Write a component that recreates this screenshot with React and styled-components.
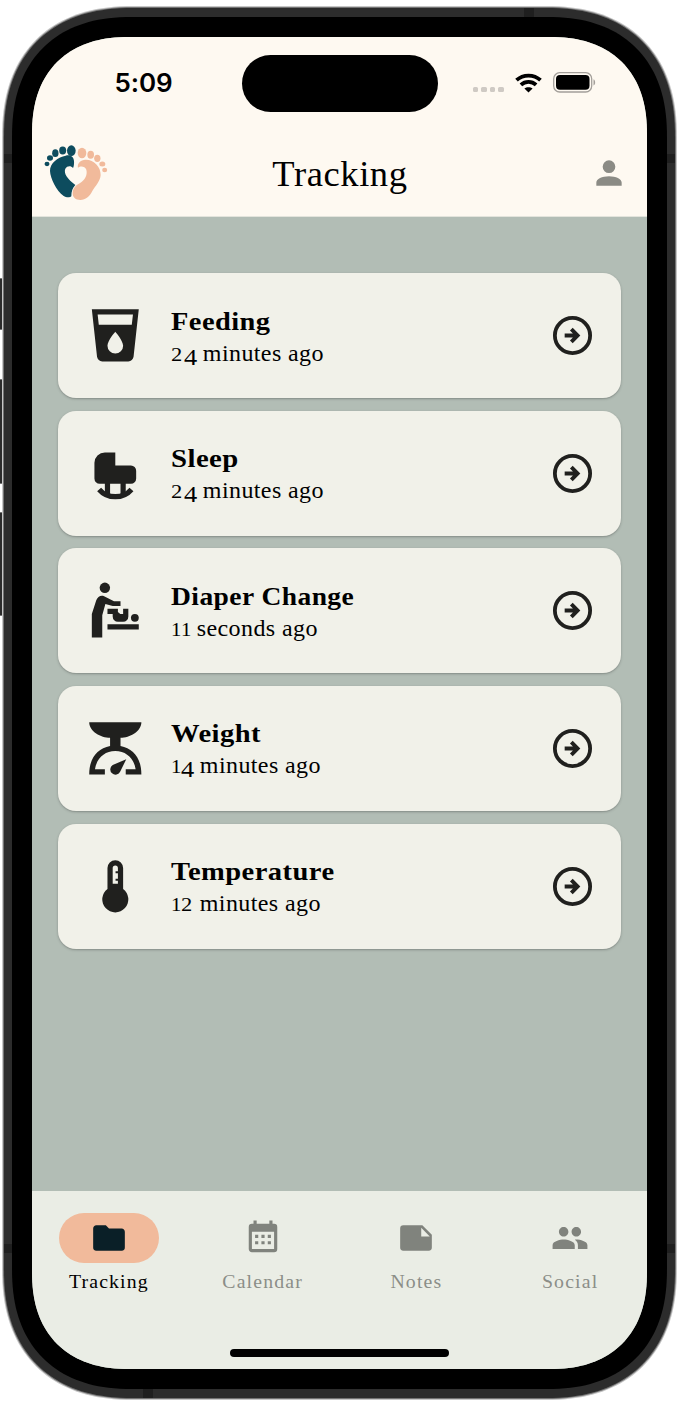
import React from 'react';
import styled, { createGlobalStyle } from 'styled-components';

// Rounded rectangle with superellipse corners, as an absolute clip path.
const smoothRect = (w, h, r) => {
  const a = r * 1.15;
  const n = 2.37;
  const steps = 40;
  const topLeft = Array.from({ length: steps + 1 }, (_, i) => {
    const t = (i / steps) * (Math.PI / 2);
    return [
      a * (1 - Math.max(0, Math.cos(t)) ** (2 / n)),
      a * (1 - Math.sin(t) ** (2 / n)),
    ];
  });
  const topRight = topLeft.map(([x, y]) => [w - x, y]).reverse();
  const bottomRight = topLeft.map(([x, y]) => [w - x, h - y]);
  const bottomLeft = topLeft.map(([x, y]) => [x, h - y]).reverse();
  const ring = [...topLeft, ...topRight, ...bottomRight, ...bottomLeft];
  return `path("M${ring.map(p => p.map(v => v.toFixed(2)).join(' ')).join('L')}Z")`;
};

const GlobalStyle = createGlobalStyle`
  * { box-sizing: border-box; }
  body { margin: 0; background: #fff; font-family: "Liberation Serif", serif; color: #000; }
  svg { display: block; flex: none; }
`;

const Stage = styled.main`
  position: relative;
  width: 677px;
  height: 1403px;
  padding: 6px 0 0 2px;
  overflow: hidden;
`;
const Shell = styled.div`
  position: relative;
  width: ${p => p.$w}px;
  height: ${p => p.$h}px;
  padding: ${p => p.$pad};
  background: ${p => p.$color};
  clip-path: ${p => smoothRect(p.$w, p.$h, p.$r)};
`;
const SideButton = styled.span`
  position: absolute;
  ${p => p.$side}: 0;
  top: ${p => p.$top}px;
  width: 3px;
  height: ${p => p.$h}px;
  background: #2b2b2b;
  border-top: 1px solid #777;
  border-bottom: 1px solid #777;
`;
const Antenna = styled.span`
  position: absolute;
  left: ${p => p.$x}px;
  top: ${p => p.$y}px;
  width: ${p => p.$w}px;
  height: ${p => p.$h}px;
  background: #1f1f1f;
`;
const Screen = styled.div`
  width: 615px;
  height: 1332px;
  display: flex;
  flex-direction: column;
  background: #b2bdb5;
  clip-path: ${smoothRect(615, 1332, 86)};
`;
const StatusBar = styled.div`
  height: 93px;
  padding-top: 17.5px;
  display: grid;
  grid-template-columns: 209.5px 196px 1fr;
  align-items: start;
  background: #fef9f1;
`;
const Time = styled.time`
  padding: 13.5px 0 0 82.5px;
  font: 600 26px/30px Inter, sans-serif;
  letter-spacing: -0.1px;
`;
const Island = styled.div`
  height: 57px;
  border-radius: 28.5px;
  background: #000;
`;
const Indicators = styled.div`
  display: flex;
  align-items: center;
  padding: 17.5px 0 0 35.5px;
`;
const Dots = styled.div`
  display: flex;
  gap: 3px;
  margin: 14px 11px 0 0;
`;
const Dot = styled.i`
  width: 5.4px;
  height: 5.4px;
  border-radius: 1.5px;
  background: #cfcac4;
`;
const BatteryIcon = styled.svg`
  margin-left: 11.5px;
`;
const Header = styled.header`
  height: 87px;
  flex: none;
  display: grid;
  grid-template-columns: 94px 1fr 94px;
  align-items: center;
  padding: 0 18.6px 0 12px;
  background: #fef9f1;
  border-bottom: 1px solid #e3e4dc;
`;
const Title = styled.h1`
  margin: 0;
  padding: 2px 0 0 7.5px;
  text-align: center;
  font-size: 36.5px;
  line-height: 44px;
  font-weight: 400;
  letter-spacing: 0.6px;
`;
const ProfileButton = styled.button`
  justify-self: end;
  border: 0;
  padding: 0;
  background: none;
  color: #8b8b85;
`;
const List = styled.section`
  flex: 1;
  display: flex;
  flex-direction: column;
  gap: 12.6px;
  padding: 56.2px 26px 0;
`;
const Card = styled.article`
  height: 125px;
  display: flex;
  align-items: center;
  padding: 0 24.8px 0 26px;
  border-radius: 18px;
  background: #f1f1e9;
  color: #20201e;
  box-shadow: 0 1px 3px rgba(0, 0, 0, 0.2), 0 1px 1px rgba(0, 0, 0, 0.08);
`;
const CardText = styled.div`
  flex: 1;
  padding: 2px 0 0 24.4px;
  color: #000;
`;
const CardTitle = styled.h2`
  margin: 0;
  width: max-content;
  font-size: 25px;
  line-height: 32px;
  font-weight: 700;
  letter-spacing: 0.4px;
  transform: translateY(0.6px) scaleX(${p => p.$stretch});
  transform-origin: left;
`;
const CardTime = styled.p`
  margin: 0;
  font-size: 24px;
  line-height: 32px;
  letter-spacing: 0.4px;
  white-space: pre;
`;
const figures = {
  1: { size: 0.75, width: 9.7, stretch: 1.15, drop: 0 },
  2: { size: 0.75, width: 12.7, stretch: 1.25, drop: 0 },
  4: { size: 1, width: 12.8, stretch: 1.1, drop: 3.5 },
};
const Digit = styled.span`
  display: inline-block;
  width: ${p => figures[p.$value].width}px;
  font-size: ${p => figures[p.$value].size}em;
  line-height: 1;
  letter-spacing: 0;
  transform: translateY(${p => figures[p.$value].drop}px) scaleX(${p => figures[p.$value].stretch});
  transform-origin: left;
`;
const TabBar = styled.nav`
  height: 178.5px;
  flex: none;
  display: grid;
  grid-template: 1fr auto / repeat(4, 1fr);
  padding: 22px 0 12px;
  background: #eaede5;
`;
const Tab = styled.a`
  display: flex;
  flex-direction: column;
  align-items: center;
  color: ${p => (p.$active ? '#000' : '#8b8e88')};
  font-size: 19.8px;
  line-height: 24px;
  letter-spacing: 1.15px;
`;
const Pill = styled.span`
  width: 100px;
  height: 50px;
  margin-bottom: 6px;
  display: grid;
  place-items: center;
  border-radius: 25px;
  background: ${p => (p.$active ? '#f1ba9b' : 'transparent')};
  color: ${p => (p.$active ? '#0a1f27' : '#80837d')};
`;
const HomeBar = styled.div`
  grid-column: 1 / -1;
  justify-self: center;
  width: 219px;
  height: 8px;
  border-radius: 4px;
  background: #000;
`;

const Icon = ({ size, children }) => (
  <svg width={size} height={size} viewBox="0 0 24 24" fill="currentColor">{children}</svg>
);

const Logo = () => (
  <svg width="64" height="56" viewBox="27 30 192 168">
    <g fill="#0d4c5e">
      <path d="M92 62C104 58 116 64 117 78C118 88 116 96 114 99C108 91 96 92 91 101C85 115 98 132 121 150C113 158 109 168 109 184C104 189 92 187 86 183C64 168 46 130 45 108C44 84 70 66 92 62Z" />
      <ellipse cx="36" cy="87" rx="7.500" ry="6.500" />
      <ellipse cx="45" cy="69" rx="9" ry="8" />
      <ellipse cx="61" cy="54.500" rx="9.500" ry="11.500" />
      <ellipse cx="83" cy="46.500" rx="10.500" ry="12" />
      <ellipse cx="109" cy="47" rx="13" ry="16" />
    </g>
    <g fill="#f1ba9b">
      <path d="M150 74C175 72 198 95 197 120C196 138 182 152 172 168C164 184 152 195 136 195C122 195 112 188 113 172C115 158 124 150 134 145C150 134 158 120 154 104C150 93 136 92 129 98C127 90 130 77 150 74Z" />
      <ellipse cx="141" cy="54" rx="13" ry="15.500" />
      <ellipse cx="167" cy="59" rx="10" ry="12" />
      <ellipse cx="187" cy="70" rx="9.500" ry="11" />
      <ellipse cx="202" cy="87" rx="9" ry="7.500" />
      <ellipse cx="209" cy="105" rx="7.500" ry="7" />
    </g>
  </svg>
);

const CupIcon = () => (
  <path d="M18.32 8H5.67L5.23 4H18.77M3 2L5 20.23C5.13 21.23 5.97 22 7 22H17C18 22 18.87 21.23 19 20.23L21 2H3M12 19A3 3 0 0 1 9 16C9 14 12 10.6 12 10.6C12 10.6 15 14 15 16A3 3 0 0 1 12 19Z" />
);
const CradleIcon = () => (
  <>
    <path d="M4 8a4 4 0 0 1 4-4h4v5h6a2 2 0 0 1 2 2v3a2 2 0 0 1-2 2H6a2 2 0 0 1-2-2zM8 16h2v4.500H8zM14 16h2v4.500h-2z" />
    <path d="M5.800 18.200C9 21.900 15 21.900 18.200 18.200" fill="none" stroke="currentColor" strokeWidth="2" />
  </>
);
const ChangingIcon = () => (
  <>
    <circle cx="8" cy="3" r="2" />
    <circle cx="19.500" cy="14.500" r="1.500" />
    <path d="M3 22V13L4.700 7.800C5.200 6.400 6.400 5.700 7.700 6.200L11.500 8.100H14V10H11L8.200 9.200L7 13.500V22ZM9 17h12v2H9zM9 11h4v1.300l.9.700h1.100v-2h2v3a2 2 0 0 1-2 2h-2a2 2 0 0 1-2-2v-1H9z" />
  </>
);
const ScaleIcon = () => (
  <path d="M2 2H22C22 5.500 17.500 8 14 8V11.100C19 12 22 16 22 22H16V20H19.800C19.200 16 16.300 13 12 13S4.800 16 4.200 20H8V22H2C2 16 5 12 10 11.100V8C6.500 8 2 5.500 2 2ZM16.200 16.200L13.900 20.900A2 2 0 1 1 11 18.400Z" />
);
const ThermometerIcon = () => (
  <path fillRule="evenodd" d="M15 13V5a3 3 0 0 0-6 0v8a5 5 0 1 0 6 0M12 4a1 1 0 0 0-1 1v6h2v-1.100h-.9v-.8H13V7h-.9v-.8H13V5a1 1 0 0 0-1-1" />
);
const ArrowIcon = () => (
  <>
    <circle cx="12" cy="12" r="9" fill="none" stroke="currentColor" strokeWidth="1.950" />
    <path d="M8 13v-2h4.200l-1.500-1.500 1.400-1.400L16 12l-3.900 3.900-1.400-1.400 1.500-1.500z" />
  </>
);

const entries = [
  { name: 'Feeding', time: '24 minutes ago', Glyph: CupIcon, stretch: 1.137 },
  { name: 'Sleep', time: '24 minutes ago', Glyph: CradleIcon, stretch: 1.15 },
  { name: 'Diaper Change', time: '11 seconds ago', Glyph: ChangingIcon, stretch: 1.1 },
  { name: 'Weight', time: '14 minutes ago', Glyph: ScaleIcon, stretch: 1.143 },
  { name: 'Temperature', time: '12 minutes ago', Glyph: ThermometerIcon, stretch: 1.142 },
];

const tabs = [
  { name: 'Tracking', active: true, d: 'M10 4H4C2.890 4 2 4.890 2 6V18A2 2 0 0 0 4 20H20A2 2 0 0 0 22 18V8C22 6.890 21.100 6 20 6H12L10 4Z' },
  { name: 'Calendar', d: 'M9 10V12H7V10H9M13 10V12H11V10H13M17 10V12H15V10H17M19 3A2 2 0 0 1 21 5V19A2 2 0 0 1 19 21H5C3.890 21 3 20.100 3 19V5A2 2 0 0 1 5 3H6V1H8V3H16V1H18V3H19M19 19V8H5V19H19M9 14V16H7V14H9M13 14V16H11V14H13M17 14V16H15V14H17Z' },
  { name: 'Notes', d: 'M4 4A2 2 0 0 0 2 6V18A2 2 0 0 0 4 20H20A2 2 0 0 0 22 18V10L16 4ZM15.300 5.500L20.700 11H15.300Z' },
  { name: 'Social', d: 'M16 11c1.660 0 2.990-1.340 2.990-3S17.660 5 16 5c-1.660 0-3 1.340-3 3s1.340 3 3 3zm-8 0c1.660 0 2.990-1.340 2.990-3S9.660 5 8 5C6.340 5 5 6.340 5 8s1.340 3 3 3zm0 2c-2.330 0-7 1.170-7 3.500V19h14v-2.500c0-2.330-4.670-3.500-7-3.500zm8 0c-.29 0-.62.020-.97.050 1.160.84 1.970 1.970 1.970 3.450V19h6v-2.500c0-2.330-4.670-3.500-7-3.500z' },
];

// Text figures: 1 and 2 sit at x-height, 4 drops below the baseline.
const OldStyle = ({ text }) =>
  text.split(/(\d)/).filter(Boolean).map((s, i) =>
    /\d/.test(s) ? <Digit key={i} $value={s}>{s}</Digit> : s
  );

export default function App() {
  return (
    <>
      <GlobalStyle />
      <Stage>
        <SideButton $side="left" $top={278} $h={52} />
        <SideButton $side="left" $top={379} $h={105} />
        <SideButton $side="left" $top={512} $h={104} />
        <SideButton $side="right" $top={450} $h={166} />
        <Shell $w={675} $h={1394} $pad="1px" $color="#c6c6c6" $r={116}>
          <Shell $w={673} $h={1392} $pad="1px" $color="#727272" $r={115}>
            <Shell $w={671} $h={1390} $pad="9px 8px" $color="#2c2c2c" $r={114}>
              <Antenna $x={520} $y={0} $w={10} $h={9} />
              <Antenna $x={139} $y={1381} $w={10} $h={9} />
              <Antenna $x={0} $y={146} $w={8} $h={9} />
              <Antenna $x={663} $y={146} $w={8} $h={9} />
              <Antenna $x={0} $y={1236} $w={8} $h={9} />
              <Antenna $x={663} $y={1236} $w={8} $h={9} />
              <Shell $w={655} $h={1372} $pad="20px" $color="#000" $r={106}>
                <Screen>
                  <StatusBar>
                    <Time>5:09</Time>
                    <Island />
                    <Indicators>
                      <Dots><Dot /><Dot /><Dot /><Dot /></Dots>
                      <svg width="27" height="20" viewBox="0 0 27 20">
                        <g fill="none" stroke="#000" strokeWidth="3.800">
                          <path d="M1.500 7.200C8.200 1 18.800 1 25.500 7.200" />
                          <path d="M5.900 11.900C10.300 7.900 16.700 7.900 21.100 11.900" />
                        </g>
                        <path d="M13.500 19.500L9.400 15.600C11.700 13.700 15.300 13.700 17.600 15.600Z" />
                      </svg>
                      <BatteryIcon width="43" height="21" viewBox="0 0 43 21">
                        <rect x="0.700" y="0.700" width="38" height="19.300" rx="6" fill="none" stroke="#a39f9a" strokeWidth="1.300" />
                        <rect x="3" y="3" width="33.500" height="14.700" rx="4" />
                        <path d="M40.500 7.200C42.700 8.200 42.700 12.500 40.500 13.500Z" fill="#a39f9a" />
                      </BatteryIcon>
                    </Indicators>
                  </StatusBar>
                  <Header>
                    <Logo />
                    <Title>Tracking</Title>
                    <ProfileButton aria-label="Profile">
                      <Icon size={38}>
                        <path d="M12 4A4 4 0 0 1 16 8A4 4 0 0 1 12 12A4 4 0 0 1 8 8A4 4 0 0 1 12 4M12 14C16.420 14 20 15.790 20 18V20H4V18C4 15.790 7.580 14 12 14Z" />
                      </Icon>
                    </ProfileButton>
                  </Header>
                  <List>
                    {entries.map(({ name, time, Glyph, stretch }) => (
                      <Card key={name}>
                        <Icon size={62.6}><Glyph /></Icon>
                        <CardText>
                          <CardTitle $stretch={stretch}>{name}</CardTitle>
                          <CardTime><OldStyle text={time} /></CardTime>
                        </CardText>
                        <Icon size={47}><ArrowIcon /></Icon>
                      </Card>
                    ))}
                  </List>
                  <TabBar>
                    {tabs.map(t => (
                      <Tab key={t.name} $active={t.active}>
                        <Pill $active={t.active}>
                          <Icon size={38}><path fillRule="evenodd" d={t.d} /></Icon>
                        </Pill>
                        {t.name}
                      </Tab>
                    ))}
                    <HomeBar />
                  </TabBar>
                </Screen>
              </Shell>
            </Shell>
          </Shell>
        </Shell>
      </Stage>
    </>
  );
}
